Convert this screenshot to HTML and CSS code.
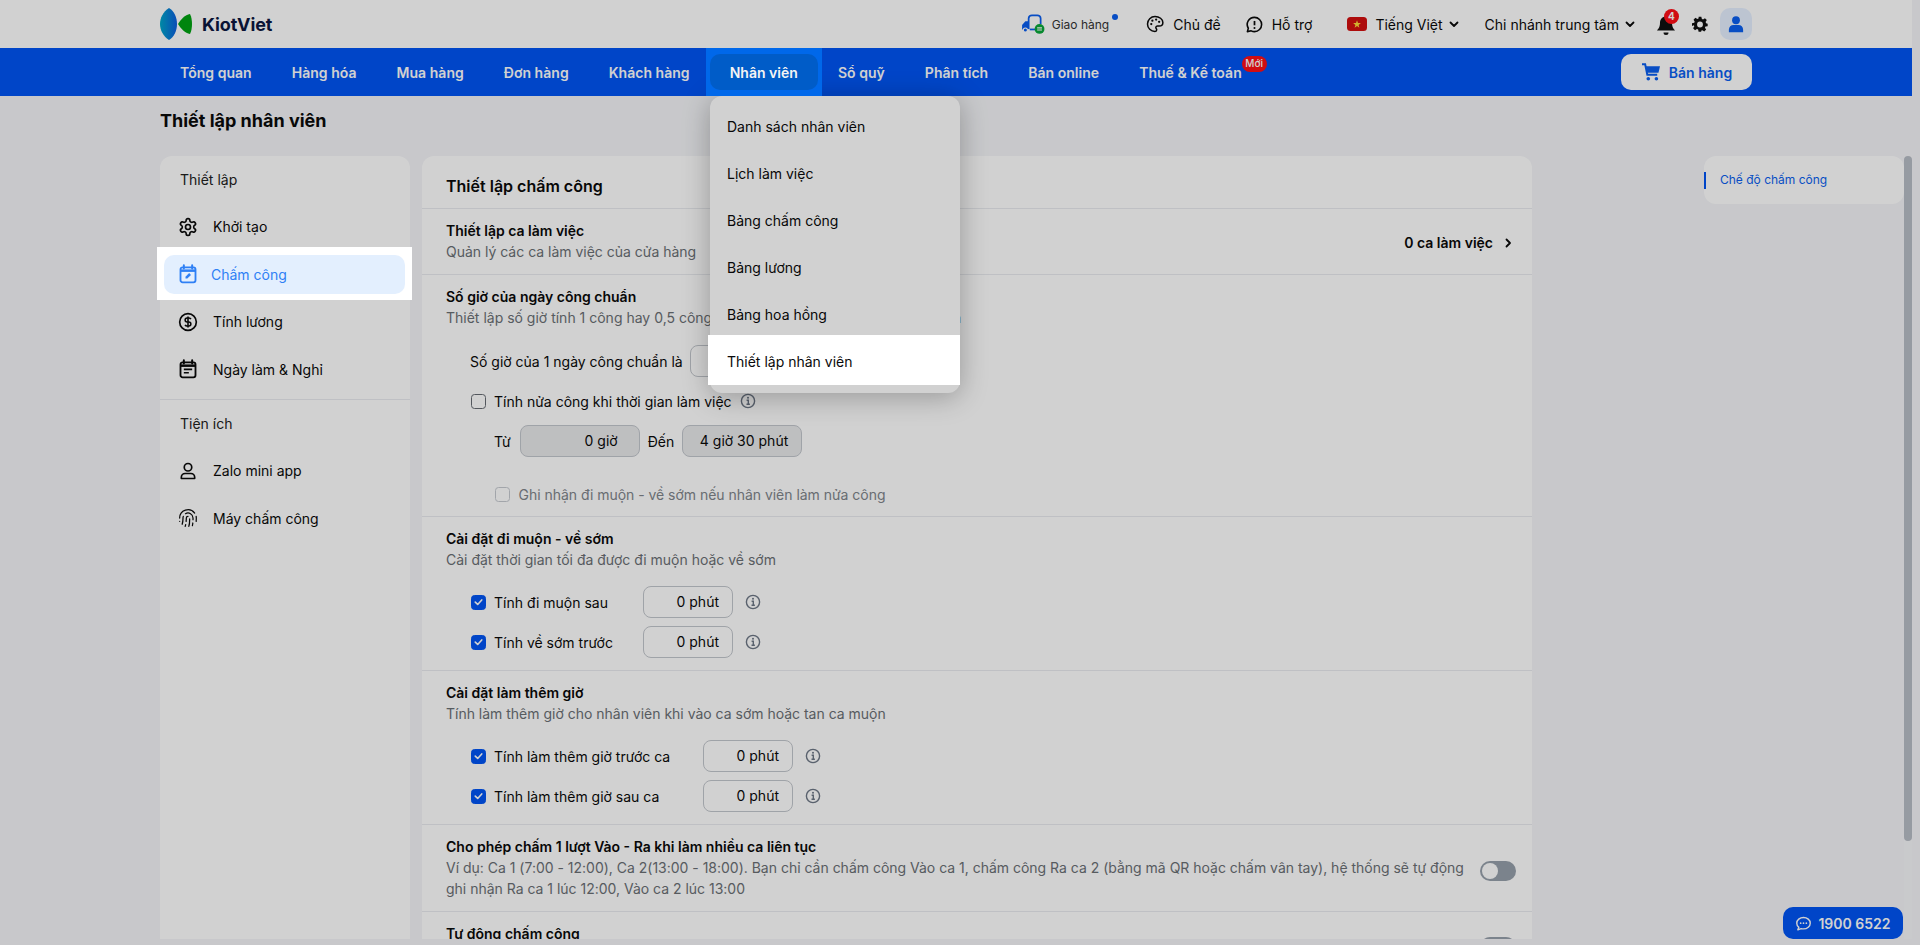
FILE: index.html
```html
<!DOCTYPE html>
<html lang="vi">
<head>
<meta charset="utf-8">
<title>Thiết lập nhân viên</title>
<link rel="stylesheet" href="styles.css">
</head>
<body>
<svg class="sprite" aria-hidden="true">
  <symbol id="i-gear" viewBox="0 0 24 24"><path d="M12.22 2h-.44a2 2 0 0 0-2 2v.18a2 2 0 0 1-1 1.73l-.43.25a2 2 0 0 1-2 0l-.15-.08a2 2 0 0 0-2.73.73l-.22.38a2 2 0 0 0 .73 2.73l.15.1a2 2 0 0 1 1 1.72v.51a2 2 0 0 1-1 1.74l-.15.09a2 2 0 0 0-.73 2.73l.22.38a2 2 0 0 0 2.73.73l.15-.08a2 2 0 0 1 2 0l.43.25a2 2 0 0 1 1 1.73V20a2 2 0 0 0 2 2h.44a2 2 0 0 0 2-2v-.18a2 2 0 0 1 1-1.73l.43-.25a2 2 0 0 1 2 0l.15.08a2 2 0 0 0 2.73-.73l.22-.39a2 2 0 0 0-.73-2.73l-.15-.08a2 2 0 0 1-1-1.74v-.5a2 2 0 0 1 1-1.74l.15-.09a2 2 0 0 0 .73-2.73l-.22-.38a2 2 0 0 0-2.73-.73l-.15.08a2 2 0 0 1-2 0l-.43-.25a2 2 0 0 1-1-1.73V4a2 2 0 0 0-2-2z" fill="none" stroke="currentColor" stroke-width="2"/><circle cx="12" cy="12" r="3" fill="none" stroke="currentColor" stroke-width="2"/></symbol>
  <symbol id="i-calpen" viewBox="0 0 24 24"><path d="M7 1.5v4M17 1.5v4" stroke="currentColor" stroke-width="2.4" stroke-linecap="round"/><rect x="3" y="4" width="18" height="18" rx="2.5" fill="none" stroke="currentColor" stroke-width="2.2"/><path d="M3 8h18" stroke="currentColor" stroke-width="3"/><path d="M9 17.5v-2.2l4.4-4.4 2.2 2.2-4.4 4.4z" fill="currentColor"/></symbol>
  <symbol id="i-dollar" viewBox="0 0 24 24"><circle cx="12" cy="12" r="10" fill="none" stroke="currentColor" stroke-width="2"/><path d="M15.5 8.6A2.6 2.6 0 0 0 13 7.2h-2a2.4 2.4 0 0 0 0 4.8h2a2.4 2.4 0 0 1 0 4.8h-2a2.6 2.6 0 0 1-2.5-1.4M12 5.4v13.2" fill="none" stroke="currentColor" stroke-width="1.9"/></symbol>
  <symbol id="i-callist" viewBox="0 0 24 24"><path d="M7 1.5v4M17 1.5v4" stroke="currentColor" stroke-width="2.4" stroke-linecap="round"/><rect x="3" y="4" width="18" height="18" rx="2.5" fill="none" stroke="currentColor" stroke-width="2.2"/><path d="M3 8h18" stroke="currentColor" stroke-width="3"/><path d="M7 12.5h10M7 16.5h6" stroke="currentColor" stroke-width="2"/></symbol>
  <symbol id="i-user" viewBox="0 0 24 24"><circle cx="12" cy="7.5" r="4.5" fill="none" stroke="currentColor" stroke-width="2"/><path d="M4 21v-1.5A4.5 4.5 0 0 1 8.500 15h7a4.500 4.500 0 0 1 4.500 4.500V21z" fill="none" stroke="currentColor" stroke-width="2" stroke-linejoin="round"/></symbol>
  <symbol id="i-finger" viewBox="0 0 24 24"><g fill="none" stroke="currentColor" stroke-width="1.500" stroke-linecap="round"><path d="M12 10a2 2 0 0 0-2 2c0 1.020-.100 2.510-.260 4"/><path d="M14 13.120c0 2.380 0 6.380-1 8.880"/><path d="M17.290 21.020c.120-.600.430-2.300.500-3.020"/><path d="M2 12a10 10 0 0 1 18-6"/><path d="M2 16h.010"/><path d="M21.800 16c.200-2 .131-5.354 0-6"/><path d="M5 19.500C5.500 18 6 15 6 12a6 6 0 0 1 .340-2"/><path d="M8.650 22c.210-.660.450-1.320.570-2"/><path d="M9 6.800a6 6 0 0 1 9 5.200v2"/></g></symbol>
  <symbol id="i-palette" viewBox="0 0 24 24"><path d="M12 2C6.500 2 2 6.500 2 12s4.500 10 10 10c1.400 0 2.300-1 2.300-2.200 0-.6-.2-1-.6-1.500-.4-.5-.6-.9-.6-1.500 0-1.200 1-2.100 2.200-2.100h2.200c3 0 5-2.100 5-4.800C22.500 5.500 17.800 2 12 2z" fill="none" stroke="currentColor" stroke-width="2" stroke-linejoin="round"/><circle cx="7" cy="12" r="1.500" fill="currentColor"/><circle cx="8.500" cy="7.500" r="1.500" fill="currentColor"/><circle cx="13.500" cy="6" r="1.500" fill="currentColor"/><circle cx="17.500" cy="9" r="1.500" fill="currentColor"/></symbol>
  <symbol id="i-help" viewBox="0 0 24 24"><path d="M12 3a9 9 0 0 1 0 18c-1.500 0-3-.4-4.200-1L3 21l1.200-4.300A9 9 0 0 1 12 3z" fill="none" stroke="currentColor" stroke-width="2" stroke-linejoin="round"/><path d="M12 7.500v5.500" stroke="currentColor" stroke-width="2.200"/><circle cx="12" cy="16.300" r="1.300" fill="currentColor"/></symbol>
  <symbol id="i-chev" viewBox="0 0 12 12"><path d="M2.500 4.500 6 8l3.500-3.500" fill="none" stroke="currentColor" stroke-width="1.800" stroke-linecap="round" stroke-linejoin="round"/></symbol>
  <symbol id="i-info" viewBox="0 0 16 16"><circle cx="8" cy="8" r="6.600" fill="none" stroke="currentColor" stroke-width="1.400"/><path d="M6.600 7.200H8.300v4M6.500 11.200h3.400" fill="none" stroke="currentColor" stroke-width="1.400"/><circle cx="8" cy="4.800" r="1" fill="currentColor"/></symbol>
  <symbol id="i-check" viewBox="0 0 16 16"><path d="M4 8.200 7 11l5-5.500" fill="none" stroke="currentColor" stroke-width="2" stroke-linecap="round" stroke-linejoin="round"/></symbol>
</svg>

<div class="app">
  <header class="topbar">
    <a class="logo">
      <svg class="logo-mark" viewBox="0 0 32 32" aria-hidden="true">
        <defs><linearGradient id="lens" x1="0" x2="1" y1="0" y2="0"><stop offset="0" stop-color="#00a7c9"/><stop offset="1" stop-color="#0c5fe0"/></linearGradient></defs>
        <path d="M9 0C3 4 0 10 0 16s3 12 9 16c5-3 8-9 8-16S14 3 9 0z" fill="url(#lens)"/>
        <path d="M30 6c-5 1-9 5-12 10 3 5 7 9 12 10 1.500-3 2-6.500 2-10s-.5-7-2-10z" fill="#00a312"/>
      </svg>
      <span class="logo-text">KiotViet</span>
    </a>
    <div class="top-actions">
      <a class="top-link delivery">
        <svg class="ic-truck" viewBox="0 0 22 18" aria-hidden="true"><path d="M7 13.500V4a3 3 0 0 1 3-3h5a3 3 0 0 1 3 3v5" fill="none" stroke="#0a5ff0" stroke-width="1.600"/><path d="M6.500 6.500H4L1 10v4h5.500z" fill="#0a5ff0"/><circle cx="4" cy="14.500" r="1.900" fill="#0a5ff0" stroke="#fff"/><path d="M8 14h5" stroke="#0a5ff0" stroke-width="1.600"/><circle cx="17" cy="13.500" r="4.500" fill="#0aa83a"/><path d="M14.800 12.600h4.400M14.800 14.500h4.400" stroke="#fff" stroke-width="1.100"/></svg>
        <span class="delivery-text">Giao hàng</span>
        <span class="dot"></span>
      </a>
      <a class="top-link theme"><svg class="ic18"><use href="#i-palette"/></svg>Chủ đề</a>
      <a class="top-link support"><svg class="ic20"><use href="#i-help"/></svg>Hỗ trợ</a>
      <a class="top-link lang">
        <svg class="flag" viewBox="0 0 20 14" aria-hidden="true"><rect width="20" height="14" rx="3.500" fill="#d40f0f"/><path d="m10 3.300 1 2.700 2.900.1-2.300 1.800.8 2.800L10 9.100l-2.400 1.600.8-2.800-2.300-1.800L9 6z" fill="#ffd83a"/></svg>
        Tiếng Việt<svg class="chev"><use href="#i-chev"/></svg>
      </a>
      <a class="top-link branch">Chi nhánh trung tâm<svg class="chev"><use href="#i-chev"/></svg></a>
      <a class="bell">
        <svg viewBox="0 0 20 22" aria-hidden="true"><path d="M10 1.500c-3.500 0-6 2.600-6 6.300 0 4.500-1.700 6-3 7.700h18c-1.300-1.700-3-3.200-3-7.700 0-3.700-2.500-6.300-6-6.300z" fill="#111"/><path d="M7.500 17.500a2.500 2.500 0 0 0 5 0z" fill="#111"/></svg>
        <span class="bell-badge">4</span>
      </a>
      <a class="gear">
        <svg viewBox="0 0 24 24" aria-hidden="true"><path fill="#111" fill-rule="evenodd" d="M10 1h4l.7 3.300 1.800.8 2.900-1.800 2.800 2.800-1.800 2.900.8 1.800L23.500 11.500v4l-3.300.2-.8 1.800 1.800 2.900-2.800 2.800-2.900-1.800-1.800.7L13.900 23.500h-4l-.7-3.400-1.800-.7-2.900 1.800-2.800-2.800 1.800-2.900-.8-1.800L-.1 15v-4l3.400-.7.800-1.800-1.800-2.900 2.800-2.800 2.900 1.800 1.800-.8zM12 8.300a4.400 4.400 0 1 0 0 8.800 4.400 4.400 0 0 0 0-8.800z"/></svg>
      </a>
      <a class="avatar">
        <svg viewBox="0 0 24 24" aria-hidden="true"><circle cx="12" cy="7" r="5.200" fill="#0a5ff0"/><path d="M2.500 23v-3.500c0-3.500 2.700-6.200 6.200-6.200h6.600c3.500 0 6.200 2.700 6.200 6.200V23z" fill="#0a5ff0"/></svg>
      </a>
    </div>
  </header>

  <nav class="mainnav">
    <a class="nav-item">Tổng quan</a>
    <a class="nav-item">Hàng hóa</a>
    <a class="nav-item">Mua hàng</a>
    <a class="nav-item">Đơn hàng</a>
    <a class="nav-item">Khách hàng</a>
    <a class="nav-item is-active">Nhân viên</a>
    <a class="nav-item">Sổ quỹ</a>
    <a class="nav-item">Phân tích</a>
    <a class="nav-item">Bán online</a>
    <a class="nav-item has-badge">Thuế &amp; Kế toán<span class="new-badge">Mới</span></a>
    <a class="sell-btn">
      <svg viewBox="0 0 22 20" aria-hidden="true"><path d="M1 1.500h3.500l2.400 11.500h11" fill="none" stroke="#0a5ff0" stroke-width="2.200"/><path d="M5.300 3.500H21l-1.700 7.200H6.800z" fill="#0a5ff0"/><circle cx="8" cy="17.500" r="2" fill="#0a5ff0"/><circle cx="17" cy="17.500" r="2" fill="#0a5ff0"/></svg>
      Bán hàng
    </a>
  </nav>

  <div class="page">
    <h1 class="page-title">Thiết lập nhân viên</h1>
    <div class="columns">
      <aside class="sidebar">
        <div class="side-label">Thiết lập</div>
        <ul class="side-list">
          <li class="side-item"><svg class="side-ic"><use href="#i-gear"/></svg>Khởi tạo</li>
          <li class="side-item is-current"><svg class="side-ic"><use href="#i-calpen"/></svg>Chấm công</li>
          <li class="side-item"><svg class="side-ic"><use href="#i-dollar"/></svg>Tính lương</li>
          <li class="side-item"><svg class="side-ic"><use href="#i-callist"/></svg>Ngày làm &amp; Nghỉ</li>
        </ul>
        <div class="side-divider"></div>
        <div class="side-label">Tiện ích</div>
        <ul class="side-list">
          <li class="side-item"><svg class="side-ic"><use href="#i-user"/></svg>Zalo mini app</li>
          <li class="side-item"><svg class="side-ic"><use href="#i-finger"/></svg>Máy chấm công</li>
        </ul>
      </aside>

      <main class="card">
        <h2 class="card-title">Thiết lập chấm công</h2>

        <section class="sec sec-split">
          <div>
            <h3 class="sec-title">Thiết lập ca làm việc</h3>
            <p class="sec-sub">Quản lý các ca làm việc của cửa hàng</p>
          </div>
          <a class="shift-link">0 ca làm việc<svg class="chev-right" viewBox="0 0 12 12" aria-hidden="true"><path d="M4.500 2.500 8 6l-3.500 3.500" fill="none" stroke="currentColor" stroke-width="1.800" stroke-linecap="round" stroke-linejoin="round"/></svg></a>
        </section>

        <section class="sec">
          <h3 class="sec-title">Số giờ của ngày công chuẩn</h3>
          <p class="sec-sub sub-plain">Thiết lập số giờ tính 1 công hay 0,5 công theo thời gian làm việc của nhân viên</p>
          <div class="sec-body std">
            <div class="row"><span class="std-label">Số giờ của 1 ngày công chuẩn là</span><span class="field w120">8 giờ</span></div>
            <div class="row half-row"><span class="cb"></span><span class="cb-label">Tính nửa công khi thời gian làm việc</span><svg class="info"><use href="#i-info"/></svg></div>
            <div class="row range-row"><span class="range-from">Từ</span><span class="field w120 locked pad21">0 giờ</span><span>Đến</span><span class="field w120 locked">4 giờ 30 phút</span></div>
            <div class="row late-row"><span class="cb cb-off"></span><span class="muted">Ghi nhận đi muộn - về sớm nếu nhân viên làm nửa công</span></div>
          </div>
        </section>

        <section class="sec">
          <h3 class="sec-title">Cài đặt đi muộn - về sớm</h3>
          <p class="sec-sub">Cài đặt thời gian tối đa được đi muộn hoặc về sớm</p>
          <div class="sec-body">
            <div class="row"><span class="cb cb-on"><svg><use href="#i-check"/></svg></span><span class="cb-label lw-s">Tính đi muộn sau</span><span class="field w90">0 phút</span><svg class="info info-gap"><use href="#i-info"/></svg></div>
            <div class="row"><span class="cb cb-on"><svg><use href="#i-check"/></svg></span><span class="cb-label lw-s">Tính về sớm trước</span><span class="field w90">0 phút</span><svg class="info info-gap"><use href="#i-info"/></svg></div>
          </div>
        </section>

        <section class="sec">
          <h3 class="sec-title">Cài đặt làm thêm giờ</h3>
          <p class="sec-sub">Tính làm thêm giờ cho nhân viên khi vào ca sớm hoặc tan ca muộn</p>
          <div class="sec-body">
            <div class="row"><span class="cb cb-on"><svg><use href="#i-check"/></svg></span><span class="cb-label lw-l">Tính làm thêm giờ trước ca</span><span class="field w90">0 phút</span><svg class="info info-gap"><use href="#i-info"/></svg></div>
            <div class="row"><span class="cb cb-on"><svg><use href="#i-check"/></svg></span><span class="cb-label lw-l">Tính làm thêm giờ sau ca</span><span class="field w90">0 phút</span><svg class="info info-gap"><use href="#i-info"/></svg></div>
          </div>
        </section>

        <section class="sec sec-toggle">
          <div class="toggle-text">
            <h3 class="sec-title">Cho phép chấm 1 lượt Vào - Ra khi làm nhiều ca liên tục</h3>
            <p class="sec-sub">Ví dụ: Ca 1 (7:00 - 12:00), Ca 2(13:00 - 18:00). Bạn chỉ cần chấm công Vào ca 1, chấm công Ra ca 2 (bằng mã QR hoặc chấm vân tay), hệ thống sẽ tự động<br>ghi nhận Ra ca 1 lúc 12:00, Vào ca 2 lúc 13:00</p>
          </div>
          <span class="toggle"></span>
        </section>

        <section class="sec sec-toggle">
          <div class="toggle-text">
            <h3 class="sec-title">Tự động chấm công</h3>
          </div>
          <span class="toggle toggle-near"></span>
        </section>
      </main>

      <aside class="toc"><a class="toc-link">Chế độ chấm công</a></aside>

      <div class="scrolltrack"><div class="scrollthumb"></div></div>
    </div>
  </div>

  <ul class="dropdown">
    <li class="dd-item">Danh sách nhân viên</li>
    <li class="dd-item">Lịch làm việc</li>
    <li class="dd-item">Bảng chấm công</li>
    <li class="dd-item">Bảng lương</li>
    <li class="dd-item">Bảng hoa hồng</li>
    <li class="dd-item is-lit">Thiết lập nhân viên</li>
  </ul>

  <a class="hotline">
    <svg viewBox="0 0 24 24" aria-hidden="true"><path d="M12 3.500c-5.200 0-9.500 3.500-9.500 8 0 2.300 1.100 4.300 2.900 5.800L4 21l4.700-1.800c1 .3 2.100.4 3.300.4 5.200 0 9.500-3.600 9.500-8.100s-4.300-8-9.500-8z" fill="none" stroke="currentColor" stroke-width="2" stroke-linejoin="round"/><circle cx="8" cy="11.500" r="1.200" fill="currentColor"/><circle cx="12" cy="11.500" r="1.200" fill="currentColor"/><circle cx="16" cy="11.500" r="1.200" fill="currentColor"/></svg>
    1900 6522
  </a>

  <div class="dim"></div>
</div>
</body>
</html>
```

FILE: styles.css
```css
* { box-sizing: border-box; }
html, body { margin: 0; padding: 0; height: 100%; }
body {
  background: #f4f5f8;
  font-family: Inter, "Noto Sans", sans-serif;
  font-size: 14px;
  line-height: 21px;
  color: #0a0a0a;
  overflow: hidden;
}
ul { list-style: none; margin: 0; padding: 0; }
h1, h2, h3, p { margin: 0; }
a { color: inherit; text-decoration: none; }
.sprite { display: none; }

.app {
  width: 1912px;
  height: 939px;
  display: flex;
  flex-direction: column;
  overflow: hidden;
}

/* top bar */
.topbar {
  height: 48px;
  flex: none;
  background: #fff;
  padding: 0 160px;
  display: flex;
  align-items: center;
  justify-content: space-between;
}
.logo { display: flex; align-items: center; gap: 10px; }
.logo-mark { width: 32px; height: 32px; display: block; }
.logo-text { font-size: 18px; font-weight: 700; color: #0b1640; letter-spacing: -.1px; }
.top-actions { display: flex; align-items: center; }
.top-link { display: flex; align-items: center; white-space: nowrap; }
.delivery { position: relative; margin-right: 28px; }
.ic-truck { width: 24px; height: 20px; margin-right: 7px; }
.delivery-text { font-size: 12px; color: #333; }
.dot { width: 6px; height: 6px; border-radius: 50%; background: #0a5ff0; margin: -14px 0 0 3px; }
.ic18 { width: 18px; height: 18px; }
.ic20 { width: 19px; height: 19px; }
.theme { gap: 9px; margin-right: 24px; }
.support { gap: 8px; margin-right: 35px; }
.flag { width: 20px; height: 14px; margin-right: 8px; }
.lang { margin-right: 25px; }
.branch { margin-right: 20px; }
.chev { width: 12px; height: 12px; margin-left: 5px; }
.bell { position: relative; width: 20px; height: 24px; margin-right: 16px; display: block; }
.bell svg { width: 20px; height: 22px; display: block; margin-top: 3px; }
.bell-badge {
  position: absolute; top: -3px; left: 8px;
  width: 15px; height: 15px; border-radius: 50%;
  background: #ff0f17; color: #fff;
  font-size: 10px; font-weight: 700; line-height: 15px; text-align: center;
}
.gear { width: 16px; height: 16px; display: block; margin-right: 12px; }
.gear svg { width: 16px; height: 16px; display: block; }
.avatar {
  width: 32px; height: 32px; border-radius: 10px;
  background: #e6f0ff;
  display: flex; align-items: center; justify-content: center;
}
.avatar svg { width: 18px; height: 18px; }

/* main navigation */
.mainnav {
  height: 48px;
  flex: none;
  background: #0055f4;
  padding: 0 160px;
  display: flex;
  align-items: center;
}
.nav-item {
  padding: 0 20px;
  height: 36px;
  display: flex;
  align-items: center;
  font-weight: 600;
  letter-spacing: .03px;
  color: #fff;
  white-space: nowrap;
}
.nav-item.is-active {
  position: relative;
  z-index: 20;
  background: #005cc8;
  border-radius: 10px;
  color: #f4f4f4;
}
.nav-item.is-active::before {
  content: "";
  position: absolute;
  inset: -6px -4px;
  background: #0068ea;
  z-index: -1;
}
.nav-item.is-active::after {
  content: "";
  position: absolute;
  inset: 0;
  background: #005cc8;
  border-radius: 10px;
  z-index: -1;
}
.has-badge { position: relative; }
.new-badge {
  position: absolute; left: calc(100% - 20px); top: 2px;
  width: 25px; height: 16px; border-radius: 8px;
  background: #ff0f17; color: #fff;
  font-size: 10px; font-weight: 500; line-height: 14px; text-align: center;
}
.sell-btn {
  margin-left: auto;
  width: 131px; height: 36px;
  background: #fff; border-radius: 10px;
  display: flex; align-items: center; justify-content: center; gap: 8px;
  font-weight: 600; color: #0a5ff0;
}
.sell-btn svg { width: 20px; height: 18px; }

/* page */
.page {
  flex: 1;
  min-height: 0;
  display: flex;
  flex-direction: column;
  padding-left: 160px;
}
.page-title {
  height: 60px;
  flex: none;
  padding-top: 11px;
  font-size: 18px;
  line-height: 28px;
  font-weight: 700;
}
.columns { flex: 1; min-height: 0; display: flex; }

.sidebar {
  width: 250px;
  flex: none;
  background: #fff;
  border-radius: 12px 12px 0 0;
  padding: 14px 5px 0 4px;
}
.side-label { padding-left: 16px; height: 20px; line-height: 20px; color: #222; margin-bottom: 17px; }
.side-list { display: flex; flex-direction: column; gap: 8px; }
.side-item {
  height: 39.500px;
  display: flex;
  align-items: center;
  gap: 15px;
  padding-left: 14px;
  border-radius: 10px;
}
.side-ic { width: 20px; height: 20px; flex: none; }
.side-item.is-current {
  position: relative;
  z-index: 20;
  background: #e3effe;
  color: #2f80f5;
  gap: 13px;
}
.side-item.is-current::before {
  content: "";
  position: absolute;
  inset: -8px -7px -6px -7px;
  background: #fff;
  z-index: -1;
}
.side-item.is-current::after {
  content: "";
  position: absolute;
  inset: 0;
  background: #e3effe;
  border-radius: 10px;
  z-index: -1;
}
.side-divider { height: 1px; background: #e9ebef; margin: 9.500px -5px 14.500px -4px; }

.card {
  width: 1110px;
  flex: none;
  margin-left: 12px;
  background: #fff;
  border-radius: 12px 12px 0 0;
  overflow: hidden;
}
.card-title {
  height: 52px;
  padding: 18px 24px 0;
  font-size: 16px;
  line-height: 24px;
  font-weight: 600;
}
.sec {
  border-top: 1px solid #e9ebef;
  padding: 11px 14px 12px 24px;
}
.sec-title { font-size: 14px; line-height: 21px; font-weight: 600; color: #0a0a0a; }
.sec-sub { font-size: 14px; line-height: 21px; color: #6b7075; letter-spacing: -.01px; }
.sub-plain { letter-spacing: 0; }
.sec-split { display: flex; justify-content: space-between; align-items: center; padding-right: 18px; }
.shift-link { display: flex; align-items: center; font-weight: 600; gap: 9px; margin-top: 3px; }
.chev-right { width: 12px; height: 12px; }
.sec-body { margin-top: 16px; padding-left: 25px; display: flex; flex-direction: column; gap: 8px; }
.row { display: flex; align-items: center; height: 32px; }
.std { gap: 12px; margin-top: 17px; margin-bottom: -2px; }
.std-label { margin-left: -1px; margin-right: 7.500px; }
.half-row { height: 24px; }
.range-row { height: 32px; padding-left: 23px; gap: 8px; }
.range-from { margin-right: 1px; }
.late-row { height: 24px; padding-left: 23.500px; margin-top: 13px; }
.cb {
  width: 15px; height: 15px; flex: none;
  border: 1.500px solid #666b72; border-radius: 3.500px;
  margin-right: 8px;
  background: #fff;
}
.cb-on { background: #0055f4; border-color: #0055f4; color: #fff; display: flex; align-items: center; justify-content: center; }
.cb-on svg { width: 14px; height: 14px; }
.cb-off { border-color: #c6cad0; margin-right: 9px; }
.muted { color: #80858b; letter-spacing: -.03px; }
.lw-s { width: 149px; }
.lw-l { width: 209px; }
.info { width: 16px; height: 16px; color: #6d7786; flex: none; margin-left: 8px; }
.info-gap { margin-left: 12px; }
.field {
  display: block;
  height: 32px;
  border: 1px solid #c3c7cd;
  border-radius: 8px;
  line-height: 30px;
  text-align: right;
  padding: 0 13px;
  flex: none;
}
.w120 { width: 120px; }
.w90 { width: 90px; }
.locked { background: #e8e9eb; }
.pad21 { padding-right: 21px; }

.sec-toggle { display: flex; justify-content: flex-start; gap: 16px; }
.toggle-text { width: 1018px; flex: none; }
.toggle {
  width: 36px; height: 20px; flex: none;
  margin-top: 25px;
  background: #97a0ab;
  border-radius: 10px;
  padding: 2px;
}
.toggle-near { margin-top: 14px; }
.toggle::before {
  content: "";
  display: block;
  width: 16px; height: 16px;
  border-radius: 50%;
  background: #fff;
}

/* right rail */
.toc {
  width: 200px;
  height: 48px;
  flex: none;
  margin-left: auto;
  background: #fff;
  border-radius: 12px;
  display: flex;
  align-items: center;
}
.toc-link {
  border-left: 2px solid #0055f4;
  height: 17px;
  padding-left: 14px;
  font-size: 12px;
  line-height: 16px;
  color: #0a5ff0;
}
.scrolltrack { width: 8px; flex: none; background: #f6f7f9; }
.scrollthumb { height: 685px; border-radius: 4px; background: #b8bdc6; }

/* dropdown */
.dropdown {
  position: absolute;
  left: 710px;
  top: 96px;
  width: 250px;
  height: 297px;
  background: #fff;
  border-radius: 12px;
  box-shadow: 0 4px 28px rgba(0, 0, 0, .28);
  padding-top: 7px;
}
.dd-item { height: 47px; line-height: 47px; padding-left: 17px; }
.dd-item.is-lit { position: relative; z-index: 20; }
.dd-item.is-lit::before {
  content: "";
  position: absolute;
  inset: -3px 0 0 -2px;
  background: #fff;
  z-index: -1;
}

/* hotline */
.hotline {
  position: absolute;
  left: 1783px;
  top: 907px;
  width: 120px;
  height: 32px;
  border-radius: 10px;
  background: #0055f4;
  color: #fff;
  font-weight: 600;
  display: flex;
  align-items: center;
  justify-content: center;
  gap: 6px;
}
.hotline svg { width: 17px; height: 17px; }

/* spotlight backdrop */
.dim {
  position: fixed;
  inset: 0;
  z-index: 10;
  background: rgba(0, 0, 0, .18);
}
```
